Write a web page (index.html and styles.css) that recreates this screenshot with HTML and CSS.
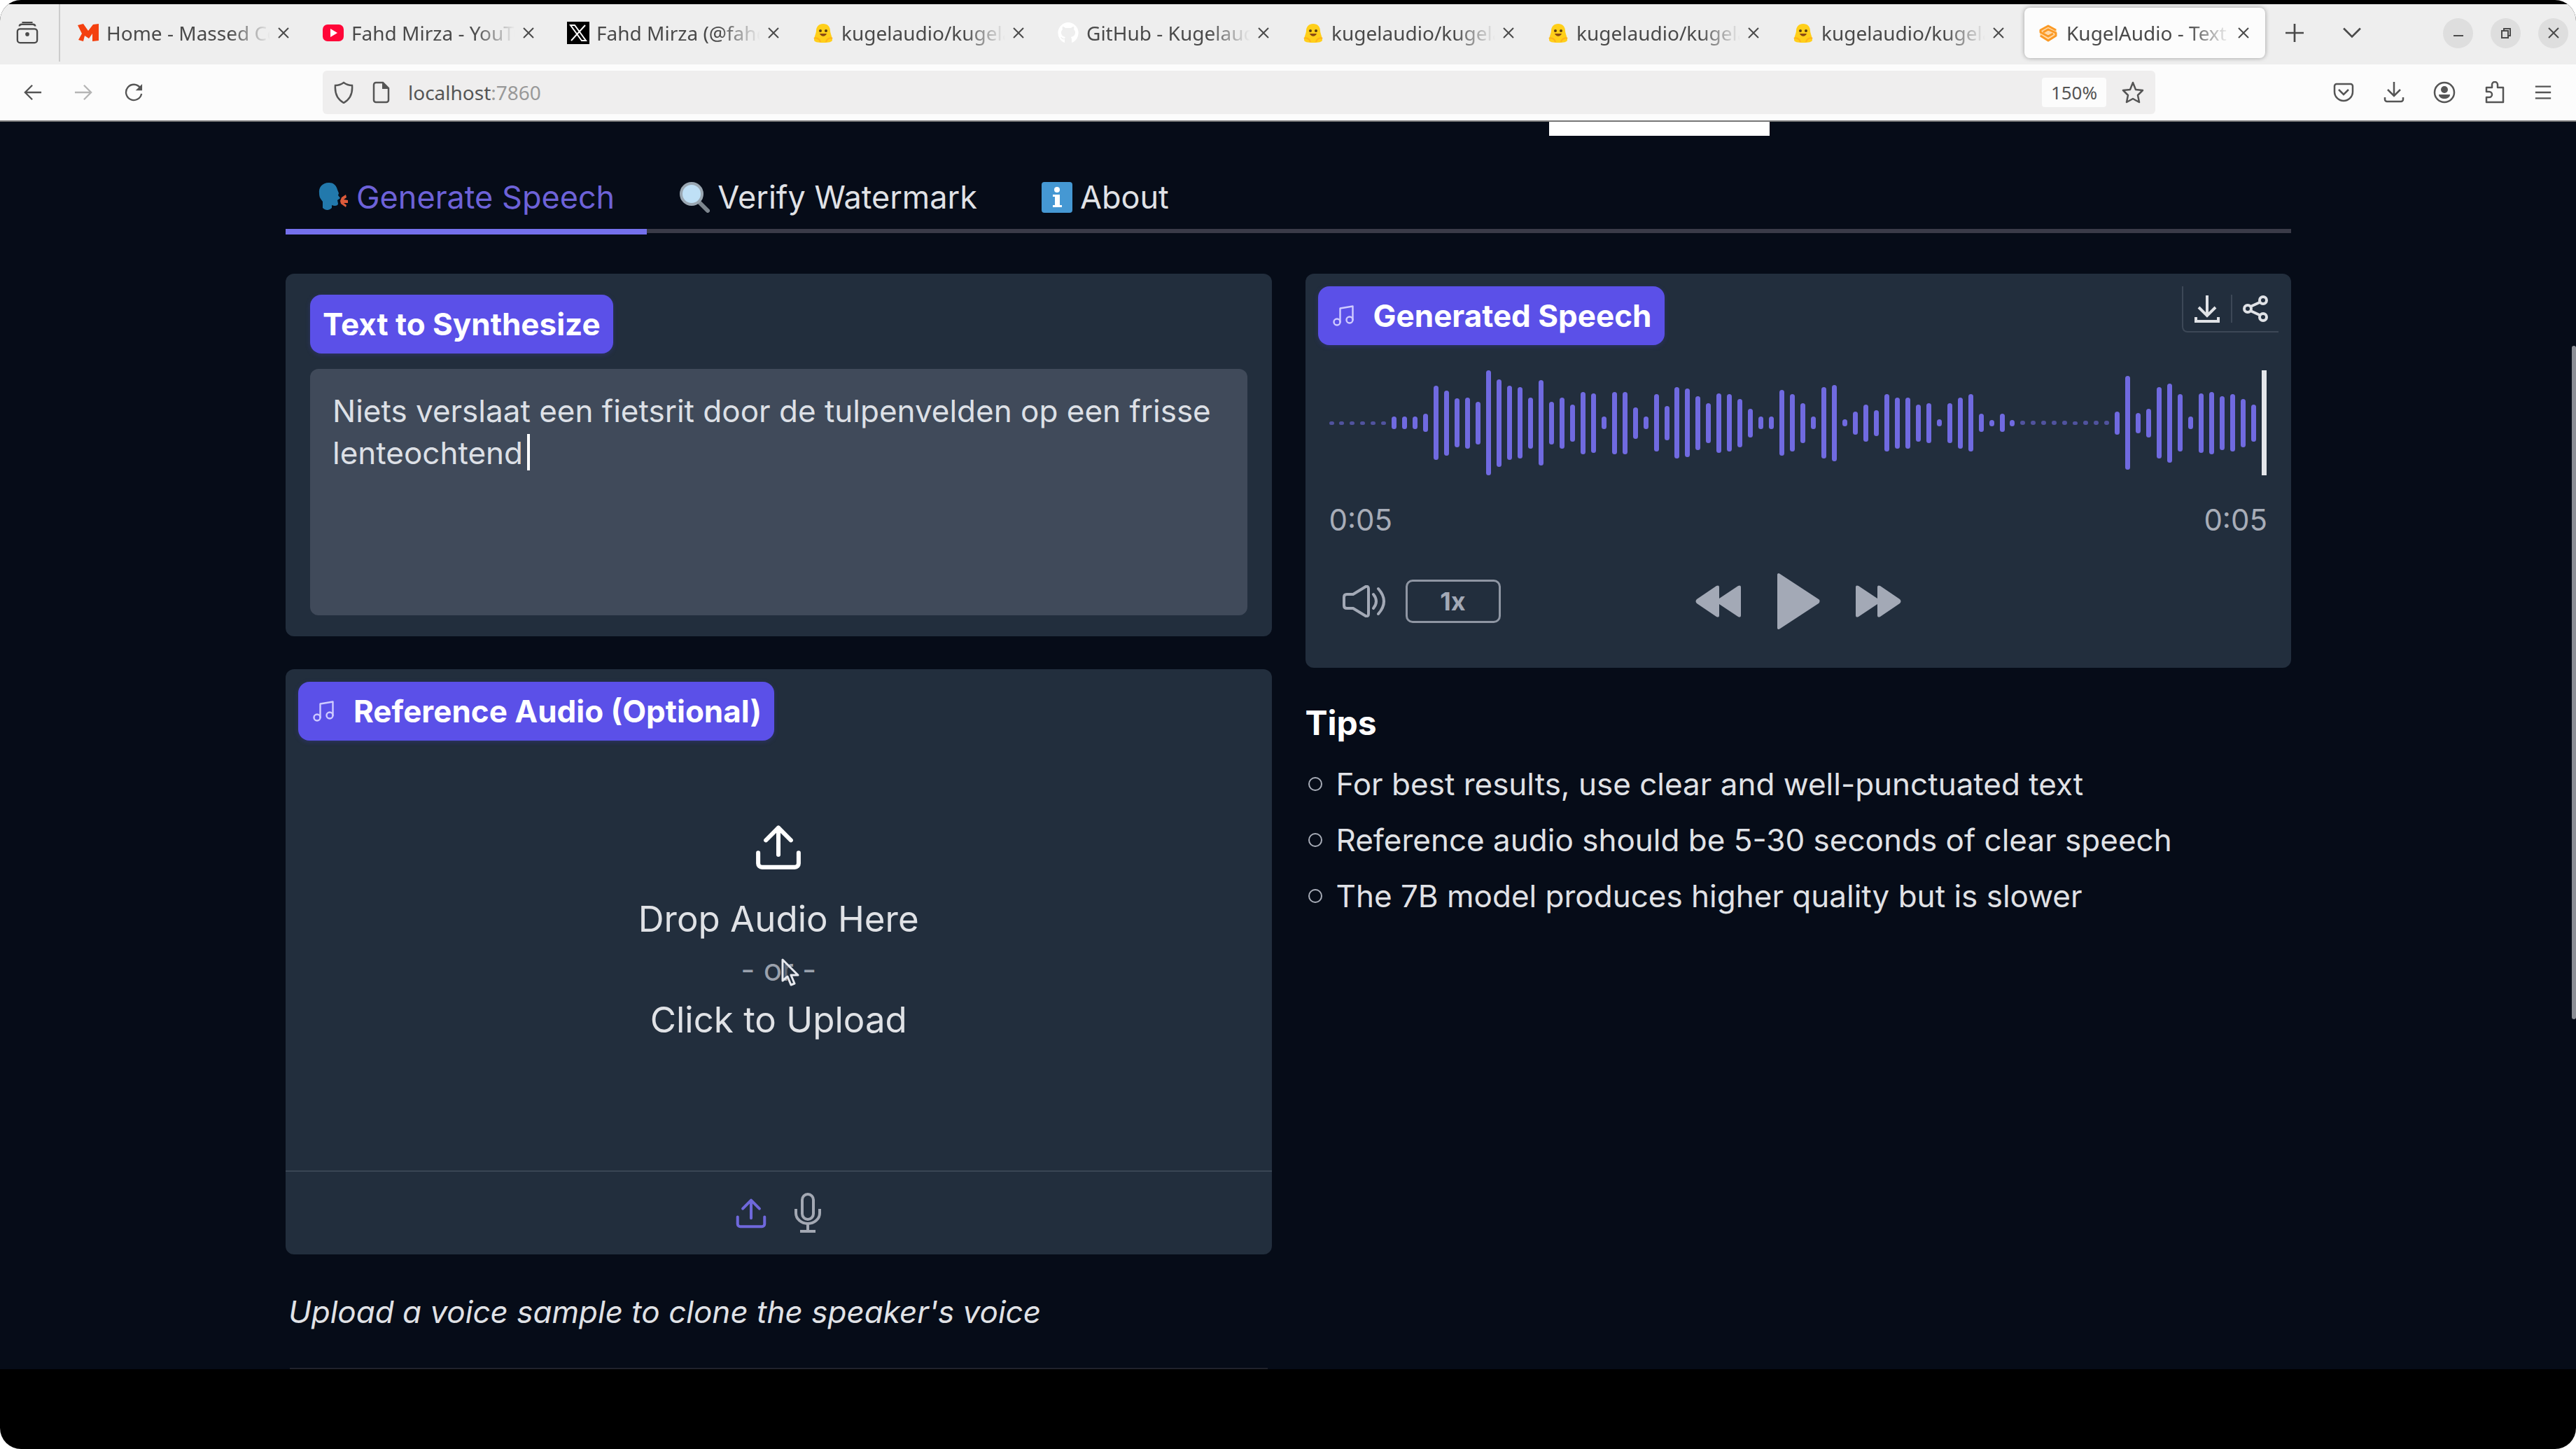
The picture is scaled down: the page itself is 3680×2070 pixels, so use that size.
FILE: index.html
```html
<!DOCTYPE html>
<html lang="en">
<head>
  <meta charset="UTF-8" />
  <meta name="viewport" content="width=device-width, initial-scale=1.0"/>
  <title>KugelAudio - Text to Speech</title>
  <link rel="stylesheet" href="styles.css">
</head>
<body>

  <!-- shared icons -->
  <svg class="icon-defs" width="0" height="0" aria-hidden="true">
    <symbol id="close" viewBox="0 0 18 18"><path d="M2 2l14 14M16 2L2 16" fill="none" stroke="currentColor" stroke-width="2"/></symbol>
    <symbol id="hug" viewBox="0 0 32 32">
      <path d="M16 3c-6 0-10 4-10 10 0 3-3 9-3 13 0 3 5 4 13 4s13-1 13-4c0-4-3-10-3-13 0-6-4-10-10-10z" fill="#ffcf1a"/>
      <path d="M3 24c2-2 8 0 9 5M29 24c-2-2-8 0-9 5" fill="none" stroke="#ffb21a" stroke-width="2"/>
      <circle cx="12" cy="13" r="2" fill="#5a3d10"/><circle cx="20" cy="13" r="2" fill="#5a3d10"/>
      <path d="M11 17c2 5 8 5 10 0z" fill="#8a4a12"/>
    </symbol>
    <symbol id="music" viewBox="0 0 24 24">
      <g fill="none" stroke="currentColor" stroke-width="1.6" stroke-linecap="round" stroke-linejoin="round">
        <path d="M9 18V5l12-2v13"/><circle cx="6" cy="18" r="3"/><circle cx="18" cy="16" r="3"/>
      </g>
    </symbol>
    <symbol id="upload" viewBox="0 0 24 24">
      <path d="M1.500 15v5.500a2 2 0 0 0 2 2h17a2 2 0 0 0 2-2V15M12 16V2M5.500 8.500L12 2l6.500 6.500" fill="none" stroke="currentColor" stroke-width="2.200" stroke-linecap="round" stroke-linejoin="round"/>
    </symbol>
    <symbol id="skip" viewBox="0 0 66 46">
      <path d="M1 3c0-3 2-3 4-2l27 18V3c0-3 2-3 4-2l28 19c2 2 2 4 0 6L36 45c-2 1-4 1-4-2V27L5 45c-2 1-4 1-4-2z" fill="currentColor"/>
    </symbol>
  </svg>

  <div class="screen">
    <!-- Browser tabs -->
    <nav class="tab-strip" aria-label="Browser tabs">
      <button class="recent" aria-label="Recent browsing">
        <svg viewBox="0 0 34 34" class="icon"><g fill="none" stroke="currentColor" stroke-width="2.500"><rect x="2" y="11" width="30" height="21" rx="4"/><path d="M5 7c0-3 2-3 4-3h16c2 0 4 0 4 3M9 1h16"/></g><circle cx="17" cy="19" r="3" fill="currentColor"/></svg>
      </button>
      <div class="browser-tabs">
        <div class="browser-tab">
          <svg class="favicon" viewBox="0 0 32 32"><path d="M1 5l8-2 7 10 7-9 8-1v24l-9 1V17l-5 7-6-4-2 8-7-2 5-9z" fill="#f4400f"/></svg>
          <span class="tab-title">Home - Massed Compute</span>
          <button aria-label="Close tab"><svg><use href="#close"/></svg></button>
        </div>
        <div class="browser-tab">
          <svg class="favicon" viewBox="0 0 32 32"><rect x="1" y="4" width="30" height="24" rx="7" fill="#ff0638"/><path d="M12 10l10 6-10 6z" fill="#fff"/></svg>
          <span class="tab-title">Fahd Mirza - YouTube</span>
          <button aria-label="Close tab"><svg><use href="#close"/></svg></button>
        </div>
        <div class="browser-tab">
          <svg class="favicon" viewBox="0 0 32 32"><path d="M0 0h32v32H0z"/><path d="M5 5h6l16 22h-6zM26 5L6 27" fill="none" stroke="#fff" stroke-width="2"/></svg>
          <span class="tab-title">Fahd Mirza (@fahdmirza)</span>
          <button aria-label="Close tab"><svg><use href="#close"/></svg></button>
        </div>
        <div class="browser-tab">
          <svg class="favicon"><use href="#hug"/></svg>
          <span class="tab-title">kugelaudio/kugelaudio</span>
          <button aria-label="Close tab"><svg><use href="#close"/></svg></button>
        </div>
        <div class="browser-tab">
          <svg class="favicon" viewBox="0 0 32 32"><path d="M16 1a15 15 0 0 0-5 29v-5c-4 1-5-2-6-3 3 0 3 3 6 2 0-1 1-2 1-2-4-1-6-3-6-7 0-2 1-3 2-4-1-2 0-4 0-4 2 0 4 2 4 2h8s2-2 4-2c0 0 1 2 0 4 1 1 2 2 2 4 0 4-2 6-6 7l1 3v5A15 15 0 0 0 16 1z" fill="#fff"/></svg>
          <span class="tab-title">GitHub - Kugelaudio</span>
          <button aria-label="Close tab"><svg><use href="#close"/></svg></button>
        </div>
        <div class="browser-tab">
          <svg class="favicon"><use href="#hug"/></svg>
          <span class="tab-title">kugelaudio/kugelaudio</span>
          <button aria-label="Close tab"><svg><use href="#close"/></svg></button>
        </div>
        <div class="browser-tab">
          <svg class="favicon"><use href="#hug"/></svg>
          <span class="tab-title">kugelaudio/kugelaudio</span>
          <button aria-label="Close tab"><svg><use href="#close"/></svg></button>
        </div>
        <div class="browser-tab">
          <svg class="favicon"><use href="#hug"/></svg>
          <span class="tab-title">kugelaudio/kugelaudio</span>
          <button aria-label="Close tab"><svg><use href="#close"/></svg></button>
        </div>
        <div class="browser-tab active">
          <svg class="favicon" viewBox="0 0 32 32"><path d="M16 5l12 6v10l-12 7-12-7V11z" fill="#ffd9a8"/><path d="M27 12L16 6 5 12v3l11 6 7-4M5 20l11 7 11-7v-4l-11-5-7 4" fill="none" stroke="#fb9a26" stroke-width="3" stroke-linejoin="round"/></svg>
          <span class="tab-title">KugelAudio - Text to Speech</span>
          <button aria-label="Close tab"><svg><use href="#close"/></svg></button>
        </div>
      </div>
      <div class="strip-buttons">
        <button aria-label="New tab"><svg class="icon-sm" viewBox="0 0 24 24"><path d="M12 0v24M0 12h24" fill="none" stroke="currentColor" stroke-width="2.500"/></svg></button>
        <button aria-label="List all tabs"><svg class="icon-sm" viewBox="0 0 24 24"><path d="M1 6l11 11L23 6" fill="none" stroke="currentColor" stroke-width="2.500"/></svg></button>
      </div>
      <div class="window-buttons">
        <button aria-label="Minimize"><svg viewBox="0 0 16 16"><path d="M1 12h14" stroke="currentColor" stroke-width="2"/></svg></button>
        <button aria-label="Restore"><svg viewBox="0 0 16 16"><path d="M2 5h9v10H2zM5 5V2h9v10h-3" fill="none" stroke="currentColor" stroke-width="2"/></svg></button>
        <button aria-label="Close window"><svg viewBox="0 0 16 16"><path d="M1 1l14 14M15 1L1 15" stroke="currentColor" stroke-width="2"/></svg></button>
      </div>
    </nav>

    <!-- Address bar -->
    <div class="toolbar">
      <div class="nav-buttons">
        <button aria-label="Back"><svg class="icon-sm" viewBox="0 0 28 28"><path d="M27 14H2M13 3L2 14l11 11" fill="none" stroke="currentColor" stroke-width="2.500"/></svg></button>
        <button aria-label="Forward" disabled><svg class="icon-sm" viewBox="0 0 28 28"><path d="M1 14h25M15 3l11 11-11 11" fill="none" stroke="currentColor" stroke-width="2.500"/></svg></button>
        <button aria-label="Reload"><svg class="icon-sm" viewBox="0 0 28 28"><path d="M24 7a12 12 0 1 0 2 9" fill="none" stroke="currentColor" stroke-width="2.500"/><path d="M27 1v10H17z" fill="currentColor"/></svg></button>
      </div>
      <div class="url-bar">
        <svg class="icon" viewBox="0 0 32 32"><path d="M16 2c4 3 8 4 12 4 1 12-3 20-12 25C7 26 3 18 4 6c4 0 8-1 12-4z" fill="none" stroke="currentColor" stroke-width="2.500"/></svg>
        <svg class="icon" viewBox="0 0 32 32"><path d="M8 2h10l8 8v17a3 3 0 0 1-3 3H8a3 3 0 0 1-3-3V5a3 3 0 0 1 3-3z" fill="none" stroke="currentColor" stroke-width="2.500"/><path d="M17 2v9h9z" fill="currentColor"/></svg>
        <span class="url">localhost<span>:7860</span></span>
        <button class="zoom-level">150%</button>
        <button aria-label="Bookmark this page"><svg class="icon" viewBox="0 0 32 32"><path d="M16 2l4 10 10 1-7 7 2 10-9-5-9 5 2-10-7-7 10-1z" fill="none" stroke="currentColor" stroke-width="2.500" stroke-linejoin="round"/></svg></button>
      </div>
      <div class="toolbar-actions">
        <button aria-label="Save to Pocket"><svg class="icon" viewBox="0 0 32 32"><path d="M6 4h20a3 3 0 0 1 3 3v8a13 13 0 0 1-26 0V7a3 3 0 0 1 3-3zM9 12l7 7 7-7" fill="none" stroke="currentColor" stroke-width="2.500"/></svg></button>
        <button aria-label="Downloads"><svg class="icon" viewBox="0 0 32 32"><path d="M16 1v20M7 12l9 9 9-9M3 23v3a3 3 0 0 0 3 3h20a3 3 0 0 0 3-3v-3" fill="none" stroke="currentColor" stroke-width="2.500"/></svg></button>
        <button aria-label="Account"><svg class="icon" viewBox="0 0 32 32"><circle cx="16" cy="16" r="14" fill="none" stroke="currentColor" stroke-width="2.500"/><circle cx="16" cy="12" r="5" fill="currentColor"/><path d="M8 19h16c0 8-16 8-16 0z" fill="currentColor"/></svg></button>
        <button aria-label="Extensions"><svg class="icon" viewBox="0 0 32 32"><path d="M4 9h8V5a4 4 0 0 1 8 0v4h8v21H4v-7h4a4 4 0 0 0 0-8H4z" fill="none" stroke="currentColor" stroke-width="2.500" stroke-linejoin="round"/></svg></button>
        <button aria-label="Menu"><svg class="icon-sm" viewBox="0 0 28 28"><path d="M2 5h24M2 14h24M2 23h24" stroke="currentColor" stroke-width="2.500"/></svg></button>
      </div>
    </div>

    <!-- Web page -->
    <main class="page">
      <div class="hero-edge"></div>

      <div class="tabs" role="tablist">
        <button class="tab selected" role="tab" aria-selected="true">
          <svg class="emoji" viewBox="0 0 44 44"><path d="M16 1C6 1 1 8 2 16c0 6 2 8 5 12v9c4 4 9 4 13 0v-4c4 2 9 1 9-2l-1-5 4-3-3-4 1-3-2-5C26 4 22 1 16 1z" fill="#2279ac"/><path d="M34 22l6-4 1 4-4 3 6 1v4l-6 0 4 3-1 3-7-5-1-4z" fill="#dd5a3a"/></svg>
          Generate Speech
        </button>
        <button class="tab" role="tab" aria-selected="false">
          <svg class="emoji" viewBox="0 0 44 44"><path d="M28 28l13 13" stroke="#7d868e" stroke-width="6" stroke-linecap="round"/><circle cx="18" cy="17" r="15" fill="#bfe0f6" stroke="#9aa7b2" stroke-width="4"/></svg>
          Verify Watermark
        </button>
        <button class="tab" role="tab" aria-selected="false">
          <svg class="emoji" viewBox="0 0 44 44"><rect width="44" height="44" rx="4" fill="#4598d3"/><rect x="19" y="18" width="7" height="18" fill="#fff"/><circle cx="22" cy="11" r="4" fill="#fff"/><path d="M16 18h6v3h-6zM16 33h13v3H16z" fill="#fff"/></svg>
          About
        </button>
      </div>

      <div class="columns">
        <section class="column">
          <div class="card text-card">
            <label class="badge" for="synth-text">Text to Synthesize</label>
            <div class="text-field">
              <textarea id="synth-text" spellcheck="false">Niets verslaat een fietsrit door de tulpenvelden op een frisse lenteochtend</textarea>
              <span class="caret"></span>
            </div>
          </div>

          <div class="card audio-card">
            <span class="badge"><svg class="badge-icon"><use href="#music"/></svg>Reference Audio (Optional)</span>
            <button class="drop-zone">
              <svg class="drop-icon"><use href="#upload"/></svg>
              <span>Drop Audio Here</span>
              <span class="or">- or -
                <svg class="pointer" viewBox="0 0 27 40"><path d="M2 2v30l7-6 5 12 5-2-5-12h10z" fill="#222e3d" fill-opacity="0.5" stroke="#e6e8ee" stroke-width="3" stroke-linejoin="round"/></svg>
              </span>
              <span>Click to Upload</span>
            </button>
            <div class="sources">
              <button class="selected" aria-label="Upload file"><svg class="source-icon"><use href="#upload"/></svg></button>
              <button aria-label="Record audio"><svg class="mic-icon" viewBox="0 0 38 58"><g fill="none" stroke="currentColor" stroke-width="4"><rect x="11" y="2" width="16" height="36" rx="8"/><path d="M2 23v6a17 15 0 0 0 34 0v-6M19 44v10M8 55h22"/></g></svg></button>
            </div>
          </div>

          <p class="hint">Upload a voice sample to clone the speaker's voice</p>
          <hr>
        </section>

        <section class="column">
          <div class="card player">
            <div class="player-head">
              <span class="badge"><svg class="badge-icon"><use href="#music"/></svg>Generated Speech</span>
              <div class="player-tools">
                <button aria-label="Download"><svg viewBox="0 0 38 40"><path d="M19 1v28M7 18l12 12 12-12M3 32v6h32v-6" fill="none" stroke="currentColor" stroke-width="4"/></svg></button>
                <button aria-label="Share"><svg viewBox="0 0 38 40"><g fill="none" stroke="currentColor" stroke-width="4"><circle cx="30" cy="8" r="5"/><circle cx="8" cy="20" r="5"/><circle cx="30" cy="32" r="5"/><path d="M12 17l13-6M12 23l13 6"/></g></svg></button>
              </div>
            </div>
            <div class="waveform" id="waveform"></div>
            <div class="times"><span>0:05</span><span>0:05</span></div>
            <div class="controls">
              <div class="volume">
                <button aria-label="Volume"><svg class="volume-icon" viewBox="0 0 62 46"><g fill="none" stroke="currentColor" stroke-width="4" stroke-linecap="round" stroke-linejoin="round"><path d="M2 17q0-4 4-4h9L33 2q4-1 4 3v36q0 4-4 3L15 33H6q-4 0-4-4zM44 13q8 10 0 20M51 5q16 18 0 36"/></g></svg></button>
                <button class="speed">1x</button>
              </div>
              <div class="transport">
                <button aria-label="Rewind"><svg class="skip-icon flip"><use href="#skip"/></svg></button>
                <button aria-label="Play"><svg class="play-icon" viewBox="0 0 62 82"><path d="M1 3c0-2 2-3 4-1l55 36c2 1 2 4 0 6L5 80c-2 2-4 1-4-1z" fill="currentColor"/></svg></button>
                <button aria-label="Forward"><svg class="skip-icon"><use href="#skip"/></svg></button>
              </div>
              <div></div>
            </div>
          </div>

          <div class="tips">
            <h3>Tips</h3>
            <ul>
              <li>For best results, use clear and well-punctuated text</li>
              <li>Reference audio should be 5-30 seconds of clear speech</li>
              <li>The 7B model produces higher quality but is slower</li>
            </ul>
          </div>
        </section>
      </div>
      <div class="scrollbar"></div>
    </main>
    <div class="bottom-bar"></div>
  </div>

  <script src="script.js"></script>
</body>
</html>
```
FILE: styles.css
```css
* {
  box-sizing: border-box;
}

body {
  margin: 0;
  background-color: #fff;
  font-family: 'Inter', sans-serif;
  color: #e0e2e6;
}

button {
  display: flex;
  align-items: center;
  justify-content: center;
  padding: 0;
  border: 0;
  background: none;
  color: inherit;
  font: inherit;
}

.icon-defs {
  position: absolute;
}

.screen {
  display: flex;
  flex-direction: column;
  min-height: 100vh;
  padding-top: 6px;
  border-radius: 30px;
  overflow: hidden;
  background-color: #000;
}

/* browser */
.tab-strip {
  display: flex;
  align-items: center;
  height: 86px;
  padding-bottom: 4px;
  background-color: #eee;
  color: #4a4a4a;
  font-family: 'Noto Sans', sans-serif;
  font-size: 28px;
}

.recent {
  flex: none;
  width: 86px;
  height: 100%;
  padding-right: 6px;
  border-right: 2px solid #ccc;
}

.icon {
  flex: none;
  width: 32px;
  height: 32px;
}

.icon-sm {
  flex: none;
  width: 26px;
  height: 26px;
}

.browser-tabs {
  display: flex;
  flex: 1;
  gap: 6px;
  min-width: 0;
  padding: 0 4px 0 6px;
}

.browser-tab {
  display: flex;
  flex: 1 1 0;
  align-items: center;
  gap: 10px;
  min-width: 0;
  height: 72px;
  padding: 0 22px 0 18px;
  border-radius: 8px;
}

.browser-tab.active {
  background-color: #fcfcfc;
  box-shadow: 0 0 6px rgba(0, 0, 0, 0.35);
}

.favicon {
  flex: none;
  width: 32px;
  height: 32px;
}

.tab-title {
  flex: 1;
  overflow: hidden;
  white-space: nowrap;
  -webkit-mask-image: linear-gradient(to right, #000 75%, transparent);
  mask-image: linear-gradient(to right, #000 75%, transparent);
}

.browser-tab button svg {
  width: 18px;
  height: 18px;
}

.strip-buttons {
  display: flex;
  gap: 56px;
  padding: 0 117px 0 25px;
}

.window-buttons {
  display: flex;
  gap: 25px;
  padding-right: 11px;
}

.window-buttons button {
  width: 43px;
  height: 43px;
  border-radius: 50%;
  background-color: #dedede;
}

.window-buttons svg {
  width: 16px;
  height: 16px;
}

.toolbar {
  display: flex;
  align-items: center;
  height: 82px;
  border-bottom: 2px solid #777;
  background-color: #fcfcfc;
  color: #555;
  font-family: 'Noto Sans', sans-serif;
  font-size: 28px;
}

.nav-buttons {
  display: flex;
  gap: 46px;
  width: 461px;
  padding-left: 34px;
}

.nav-buttons button:disabled {
  color: #b5b5b5;
}

.url-bar {
  display: flex;
  flex: 1;
  align-items: center;
  gap: 22px;
  height: 62px;
  padding: 0 16px 0 14px;
  border-radius: 6px;
  background-color: #efeeee;
}

.url {
  flex: 1;
}

.url span {
  color: #999;
}

.zoom-level {
  width: 92px;
  height: 42px;
  border-radius: 4px;
  background-color: #fcfcfc;
  font-size: 26px;
}

.toolbar-actions {
  display: flex;
  gap: 40px;
  padding: 0 34px 0 253px;
}

/* page */
.page {
  position: relative;
  flex: 1;
  padding: 0 407px 0 408px;
  overflow: hidden;
  background-color: #060c18;
}

.hero-edge {
  width: 11%;
  height: 20px;
  margin-left: 63%;
  background-color: #fff;
}

.tabs {
  display: flex;
  height: 139px;
  border-bottom: 6px solid #3a3b48;
}

.tab {
  gap: 11px;
  height: 141px;
  padding: 42px 46px 0;
  border-bottom: 8px solid transparent;
  font-size: 45px;
}

.tab.selected {
  border-color: #7470ec;
  color: #6d62d8;
}

.emoji {
  width: 44px;
  height: 44px;
}

.columns {
  display: grid;
  grid-template-columns: 1fr 1fr;
  gap: 48px;
  padding-top: 58px;
}

.column {
  min-width: 0;
}

.card {
  border-radius: 12px;
  background-color: #222e3d;
}

.badge {
  display: flex;
  align-items: center;
  gap: 25px;
  width: fit-content;
  height: 84px;
  padding: 0 18px;
  border-radius: 16px;
  background-color: #5b50e8;
  color: #fff;
  font-size: 44px;
  font-weight: 700;
  box-shadow: 0 2px 6px rgba(60, 60, 160, 0.4);
}

.badge-icon {
  width: 36px;
  height: 36px;
  color: #cfcbff;
}

.text-card {
  padding: 30px 35px;
}

.text-field {
  position: relative;
  margin-top: 22px;
}

textarea {
  display: block;
  width: 100%;
  height: 352px;
  padding: 30px 32px;
  border: 0;
  border-radius: 12px;
  outline: 0;
  resize: none;
  background-color: #404a5a;
  color: #dde0e6;
  font: 44px/60px 'Inter', sans-serif;
}

.caret {
  position: absolute;
  left: 310px;
  top: 93px;
  width: 4px;
  height: 52px;
  background-color: #fff;
}

.audio-card {
  margin-top: 47px;
  padding-top: 18px;
}

.audio-card .badge {
  margin-left: 18px;
}

.drop-zone {
  flex-direction: column;
  width: 100%;
  height: 614px;
  padding-bottom: 60px;
  font-size: 51px;
  line-height: 72px;
}

.drop-icon {
  width: 66px;
  height: 66px;
  margin-bottom: 34px;
  color: #fff;
}

.or {
  position: relative;
  color: #9aa1ad;
  font-size: 44px;
}

.pointer {
  position: absolute;
  left: 58px;
  top: 20px;
  width: 27px;
  height: 40px;
}

.sources {
  display: flex;
  align-items: center;
  justify-content: center;
  gap: 40px;
  height: 120px;
  border-top: 2px solid #3a4654;
  color: #a3a8b3;
}

.sources .selected {
  color: #6f68dc;
}

.source-icon {
  width: 44px;
  height: 44px;
}

.mic-icon {
  width: 38px;
  height: 58px;
}

.hint {
  margin: 46px 0 44px 4px;
  font-size: 44px;
  font-style: italic;
  line-height: 72px;
}

hr {
  height: 2px;
  margin: 0 6px;
  border: 0;
  background-color: #20222c;
}

/* player */
.player {
  padding: 18px 18px 54px;
}

.player-head {
  display: flex;
  align-items: flex-start;
  justify-content: space-between;
}

.player-tools {
  display: flex;
  height: 66px;
  border-left: 2px solid #3d4857;
  border-bottom: 2px solid #3d4857;
  border-radius: 0 0 0 8px;
}

.player-tools button {
  width: 68px;
}

.player-tools svg {
  width: 38px;
  height: 40px;
}

.player-tools button + button {
  height: 40px;
  margin-top: 12px;
  border-left: 2px solid #3d4857;
}

.waveform {
  display: flex;
  align-items: center;
  justify-content: space-between;
  height: 150px;
  margin: 36px 16px 0;
}

.bar {
  width: 7px;
  border-radius: 4px;
  background-color: #706ae0;
}

.bar.quiet {
  opacity: 0.6;
}

.playhead {
  width: 7px;
  height: 100%;
  background-color: #e4e6ea;
}

.times {
  display: flex;
  justify-content: space-between;
  margin: 34px 16px 0;
  color: #a8adb8;
  font-size: 42px;
  line-height: 60px;
}

.controls {
  display: grid;
  grid-template-columns: 1fr auto 1fr;
  align-items: center;
  margin-top: 45px;
  padding: 0 35px;
  color: #a3a9b6;
}

.volume {
  display: flex;
  gap: 28px;
}

.volume-icon {
  width: 62px;
  height: 46px;
}

.speed {
  width: 136px;
  height: 62px;
  border: 3px solid #8f96a3;
  border-radius: 10px;
  font-size: 36px;
  font-weight: 700;
}

.transport {
  display: flex;
  align-items: center;
  gap: 50px;
}

.skip-icon {
  width: 66px;
  height: 46px;
}

.flip {
  transform: scaleX(-1);
}

.play-icon {
  width: 62px;
  height: 82px;
}

/* tips */
.tips {
  margin-top: 46px;
}

.tips h3 {
  margin: 0;
  color: #fff;
  font-size: 48px;
  line-height: 66px;
}

.tips ul {
  margin: 14px 0 0;
  padding: 0;
  list-style: none;
  font-size: 44px;
  line-height: 80px;
}

.tips li {
  display: flex;
  align-items: center;
  gap: 20px;
}

.tips li::before {
  content: '';
  width: 16px;
  height: 16px;
  margin-left: 4px;
  border: 2px solid #a8adb8;
  border-radius: 50%;
}

.scrollbar {
  position: absolute;
  right: 0;
  top: 320px;
  width: 6px;
  height: 54%;
  border-radius: 3px;
  background-color: #8b8e95;
}

.bottom-bar {
  height: 114px;
}
```
FILE: script.js
```js
// bar heights of the generated clip, in px
const levels = [
  5, 5, 5, 5, 5, 5, 18, 18, 18, 26, 106, 93, 70, 73, 61, 150, 125, 106, 102, 73,
  122, 61, 73, 53, 89, 85, 18, 89, 89, 45, 18, 82, 49, 102, 98, 77, 57, 85, 82,
  69, 41, 18, 18, 94, 82, 57, 18, 102, 109, 10, 33, 53, 37, 82, 73, 73, 53, 57,
  10, 57, 73, 82, 26, 9, 26, 9, 6, 6, 6, 6, 6, 5, 6, 6, 6, 33, 134, 29, 41, 102,
  113, 82, 18, 85, 89, 77, 82, 69, 53
];

const waveform = document.getElementById("waveform");

levels.forEach(level => {
  const bar = document.createElement("span");
  bar.className = level < 7 ? "bar quiet" : "bar";
  bar.style.height = `${level}px`;
  waveform.appendChild(bar);
});

const playhead = document.createElement("span");
playhead.className = "playhead";
waveform.appendChild(playhead);
```
